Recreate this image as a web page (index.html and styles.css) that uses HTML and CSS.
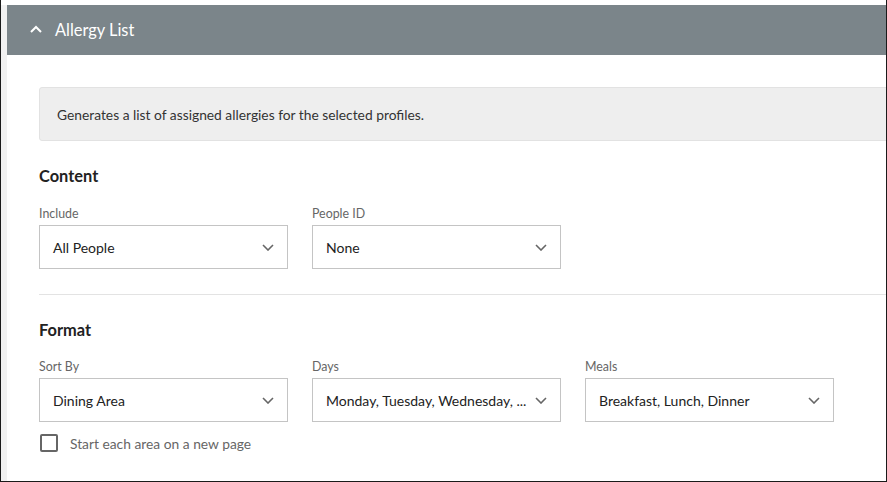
FILE: index.html
```html
<!DOCTYPE html>
<html>
<head>
<meta charset="utf-8">
<link rel="stylesheet" href="styles.css">
</head>
<body>
<div class="frame">
  <div class="strip"></div>
  <div class="panel">
    <div class="header">
      <svg class="up" width="12" height="8" viewBox="0 0 12 8"><polyline points="1,7 6,2 11,7" fill="none" stroke="#fff" stroke-width="2"/></svg>
      <span class="title">Allergy List</span>
    </div>
    <div class="content">
      <div class="info">Generates a list of assigned allergies for the selected profiles.</div>
      <h2 class="section">Content</h2>
      <div class="row">
        <div class="field">
          <div class="label">Include</div>
          <div class="select"><span>All People</span><svg class="chev" width="12" height="7" viewBox="0 0 12 7"><polyline points="1,1 6,6 11,1" fill="none" stroke="#666" stroke-width="1.6"/></svg></div>
        </div>
        <div class="field">
          <div class="label">People ID</div>
          <div class="select"><span>None</span><svg class="chev" width="12" height="7" viewBox="0 0 12 7"><polyline points="1,1 6,6 11,1" fill="none" stroke="#666" stroke-width="1.6"/></svg></div>
        </div>
      </div>
      <div class="divider"></div>
      <h2 class="section">Format</h2>
      <div class="row format-row">
        <div class="field">
          <div class="label">Sort By</div>
          <div class="select"><span>Dining Area</span><svg class="chev" width="12" height="7" viewBox="0 0 12 7"><polyline points="1,1 6,6 11,1" fill="none" stroke="#666" stroke-width="1.6"/></svg></div>
        </div>
        <div class="field">
          <div class="label">Days</div>
          <div class="select"><span>Monday, Tuesday, Wednesday, ...</span><svg class="chev" width="12" height="7" viewBox="0 0 12 7"><polyline points="1,1 6,6 11,1" fill="none" stroke="#666" stroke-width="1.6"/></svg></div>
        </div>
        <div class="field">
          <div class="label">Meals</div>
          <div class="select"><span>Breakfast, Lunch, Dinner</span><svg class="chev" width="12" height="7" viewBox="0 0 12 7"><polyline points="1,1 6,6 11,1" fill="none" stroke="#666" stroke-width="1.6"/></svg></div>
        </div>
      </div>
      <label class="check"><span class="box"></span><span class="check-text">Start each area on a new page</span></label>
    </div>
  </div>
</div>
</body>
</html>
```
FILE: styles.css
```css
* { box-sizing: border-box; }
html, body { margin: 0; padding: 0; background: #fff; }
body { font-family: Lato, "Open Sans", sans-serif; color: #222; }
.frame {
  width: 887px;
  height: 482px;
  padding-top: 5px;
  display: flex;
  border-left: 1px solid #1a1a1a;
  border-right: 1px solid #1a1a1a;
  border-bottom: 1px solid #1a1a1a;
  overflow: hidden;
}
.strip { width: 6px; background: #f1f1f1; flex: none; }
.panel { flex: 1; overflow: hidden; background: #fff; }
.header {
  height: 50px;
  background: #7b858a;
  display: flex;
  align-items: center;
  padding-left: 23px;
}
.up { margin-right: 13px; margin-top: -2px; }
.title { color: #fff; font-size: 16.4px; margin-top: -1px; }
.content { padding: 32px 0 0 32px; width: 940px; }
.info {
  height: 54px;
  background: #eeeeee;
  border: 1px solid #e2e2e2;
  border-radius: 3px;
  padding-left: 17px;
  display: flex;
  align-items: center;
  font-size: 13.8px;
  color: #333;
}
.section { margin: 26px 0 0; font-size: 16.4px; font-weight: 700; line-height: 18px; color: #222; }
.row { display: flex; gap: 24px; margin-top: 22px; }
.row.format-row { margin-top: 21px; }
.field { width: 249px; }
.label { font-size: 12.4px; line-height: 14px; color: #666; margin-bottom: 4px; }
.select {
  height: 44px;
  border: 1px solid #c4c4c4;
  display: flex;
  align-items: center;
  justify-content: space-between;
  padding: 0 13px 0 13px;
  font-size: 14px;
  color: #222;
  white-space: nowrap;
}
.chev { flex: none; margin-top: 1px; }
.divider { height: 1px; background: #e3e3e3; margin-top: 25px; }
.check { display: flex; align-items: center; margin-top: 12px; margin-left: 1px; }
.box { width: 18px; height: 18px; border: 2px solid #666; border-radius: 2px; }
.check-text { margin-left: 12px; font-size: 13.8px; color: #666; }
```
